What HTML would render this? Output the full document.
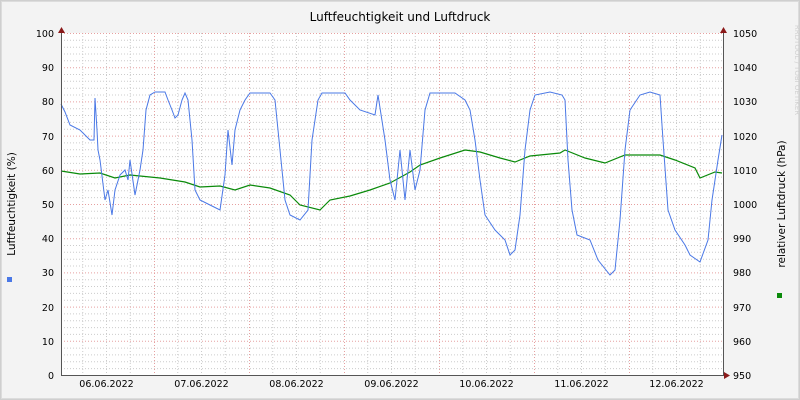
<!DOCTYPE html>
<html><head><meta charset="utf-8"><style>
html,body{margin:0;padding:0;background:#f3f3f3}
svg{display:block}
text{font-family:"DejaVu Sans","Liberation Sans",sans-serif}
</style></head><body>
<svg width="800" height="400" viewBox="0 0 800 400" xmlns="http://www.w3.org/2000/svg">
<rect x="0" y="0" width="800" height="400" fill="#f3f3f3"/>
<rect x="0.5" y="0.5" width="799" height="399" fill="none" stroke="#cfcfcf"/>
<rect x="1.5" y="1.5" width="797" height="397" fill="none" stroke="#dcdcdc" stroke-width="1"/>
<rect x="61" y="33" width="663" height="342" fill="#ffffff"/>
<g stroke="#cccccc" stroke-dasharray="1,2" stroke-width="1" fill="none">
<path d="M61 40.3H724M61 47.2H724M61 54H724M61 60.8H724M61 74.5H724M61 81.3H724M61 88.2H724M61 95H724M61 108.7H724M61 115.5H724M61 122.4H724M61 129.2H724M61 142.9H724M61 149.7H724M61 156.6H724M61 163.4H724M61 177.1H724M61 183.9H724M61 190.8H724M61 197.6H724M61 211.3H724M61 218.1H724M61 225H724M61 231.8H724M61 245.5H724M61 252.3H724M61 259.2H724M61 266H724M61 279.7H724M61 286.5H724M61 293.4H724M61 300.2H724M61 313.9H724M61 320.7H724M61 327.6H724M61 334.4H724M61 348.1H724M61 354.9H724M61 361.8H724M61 368.6H724"/>
<path d="M82.75 33V375M106.5 33V375M130.25 33V375M177.75 33V375M201.5 33V375M225.25 33V375M272.75 33V375M296.5 33V375M320.25 33V375M367.75 33V375M391.5 33V375M415.25 33V375M462.75 33V375M486.5 33V375M510.25 33V375M557.75 33V375M581.5 33V375M605.25 33V375M652.75 33V375M676.5 33V375M700.25 33V375"/>
</g>
<g stroke="#e6a0a0" stroke-dasharray="1,2" stroke-width="1" fill="none">
<path d="M61 33.5H724M61 67.7H724M61 101.9H724M61 136.1H724M61 170.3H724M61 204.5H724M61 238.7H724M61 272.9H724M61 307.1H724M61 341.3H724"/>
<path d="M154.5 33V375M249.5 33V375M344.5 33V375M439.5 33V375M534.5 33V375M629.5 33V375"/>
</g>
<polyline fill="none" stroke="#0a8a0a" stroke-width="1.2" points="61,171 80,174 100,173 115,178 130,175 160,178 185,182 200,187 220,186 235,190 250,185 270,188 290,195 300,205 320,210 330,200 350,196 370,190 390,183 410,172 420,165 440,158 465,150 480,152 500,158 515,162 530,156 560,153 565,150 585,158 605,163 625,155 645,155 660,155 675,160 695,168 700,178 715,172 722,173"/>
<polyline fill="none" stroke="#4a78e6" stroke-width="1" points="61,104 65,112 70,125 80,130 90,140 94,140 95,98 97,130 98,150 100,160 105,200 108,190 112,215 115,190 120,175 125,170 128,180 130,160 135,195 140,170 143,150 146,110 150,95 155,92 165,92 168,100 172,110 175,118 178,115 182,100 185,93 188,100 192,140 195,190 200,200 210,205 220,210 225,175 228,130 232,165 235,130 240,110 245,100 250,93 270,93 275,100 280,150 285,200 290,215 300,220 308,210 312,140 318,100 322,93 345,93 350,100 360,110 375,115 378,95 385,140 390,180 395,200 400,150 405,200 410,150 415,190 420,170 425,110 430,93 455,93 465,100 470,110 475,140 480,180 485,215 495,230 505,240 510,255 515,250 520,215 525,150 530,110 535,95 550,92 562,95 565,100 568,160 572,210 577,235 590,240 598,260 610,275 615,270 620,220 625,150 630,110 640,95 650,92 660,95 663,140 668,210 675,230 685,245 690,255 700,262 708,240 712,200 718,160 722,135"/>
<path d="M61.5 33V375.5H724M723.5 33V375.5" stroke="#555" stroke-width="1" fill="none"/>
<path d="M58 33L61.5 27L65 33Z M720 33L723.5 27L727 33Z M724 372L730 375.5L724 379Z" fill="#8b1a1a"/>
<g font-size="9.5" fill="#000">
<g text-anchor="end">
<text x="54" y="37">100</text><text x="54" y="71">90</text><text x="54" y="105">80</text><text x="54" y="140">70</text><text x="54" y="174">60</text><text x="54" y="208">50</text><text x="54" y="242">40</text><text x="54" y="276">30</text><text x="54" y="311">20</text><text x="54" y="345">10</text><text x="54" y="379">0</text>
</g>
<g text-anchor="start">
<text x="733" y="37">1050</text><text x="733" y="71">1040</text><text x="733" y="105">1030</text><text x="733" y="140">1020</text><text x="733" y="174">1010</text><text x="733" y="208">1000</text><text x="733" y="242">990</text><text x="733" y="276">980</text><text x="733" y="311">970</text><text x="733" y="345">960</text><text x="733" y="379">950</text>
</g>
<g text-anchor="middle">
<text x="106.5" y="387">06.06.2022</text><text x="201.5" y="387">07.06.2022</text><text x="296.5" y="387">08.06.2022</text><text x="391.5" y="387">09.06.2022</text><text x="486.5" y="387">10.06.2022</text><text x="581.5" y="387">11.06.2022</text><text x="676.5" y="387">12.06.2022</text>
</g>
<text x="400" y="21" font-size="12" text-anchor="middle">Luftfeuchtigkeit und Luftdruck</text>
<text transform="translate(15,204) rotate(-90)" font-size="10.5" text-anchor="middle">Luftfeuchtigkeit (%)</text>
<text transform="translate(785,204) rotate(-90)" font-size="10.5" text-anchor="middle">relativer Luftdruck (hPa)</text>
<text transform="translate(795,70) rotate(90)" font-size="7" fill="#d0d0d0" text-anchor="middle">RRDTOOL / TOBI OETIKER</text>
</g>
<rect x="7" y="277" width="5" height="5" fill="#4a78e6"/>
<rect x="777" y="293" width="5" height="5" fill="#0a8a0a"/>
</svg>
</body></html>
